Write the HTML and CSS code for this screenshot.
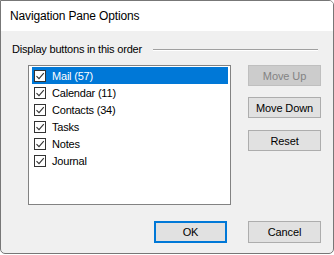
FILE: index.html
```html
<!DOCTYPE html>
<html>
<head>
<meta charset="utf-8">
<link rel="stylesheet" href="styles.css">
</head>
<body>
<div class="dialog">
  <div class="titlebar">Navigation Pane Options</div>
  <div class="content">
    <div class="group-header">
      <span class="group-label">Display buttons in this order</span>
      <span class="group-line"></span>
    </div>
    <div class="main">
      <div class="listbox">
        <div class="item selected"><span class="check"><svg viewBox="0 0 10 10" width="10" height="10"><path d="M1.5 5.2 L4 7.7 L8.8 2.2" fill="none" stroke="#333" stroke-width="1.1"/></svg></span><span class="item-text">Mail (57)</span></div>
        <div class="item"><span class="check"><svg viewBox="0 0 10 10" width="10" height="10"><path d="M1.5 5.2 L4 7.7 L8.8 2.2" fill="none" stroke="#333" stroke-width="1.1"/></svg></span><span class="item-text">Calendar (11)</span></div>
        <div class="item"><span class="check"><svg viewBox="0 0 10 10" width="10" height="10"><path d="M1.5 5.2 L4 7.7 L8.8 2.2" fill="none" stroke="#333" stroke-width="1.1"/></svg></span><span class="item-text">Contacts (34)</span></div>
        <div class="item"><span class="check"><svg viewBox="0 0 10 10" width="10" height="10"><path d="M1.5 5.2 L4 7.7 L8.8 2.2" fill="none" stroke="#333" stroke-width="1.1"/></svg></span><span class="item-text">Tasks</span></div>
        <div class="item"><span class="check"><svg viewBox="0 0 10 10" width="10" height="10"><path d="M1.5 5.2 L4 7.7 L8.8 2.2" fill="none" stroke="#333" stroke-width="1.1"/></svg></span><span class="item-text">Notes</span></div>
        <div class="item"><span class="check"><svg viewBox="0 0 10 10" width="10" height="10"><path d="M1.5 5.2 L4 7.7 L8.8 2.2" fill="none" stroke="#333" stroke-width="1.1"/></svg></span><span class="item-text">Journal</span></div>
      </div>
      <div class="side-buttons">
        <button class="btn disabled">Move Up</button>
        <button class="btn btn-down">Move Down</button>
        <button class="btn btn-reset">Reset</button>
      </div>
    </div>
    <div class="footer">
      <button class="btn default">OK</button>
      <button class="btn">Cancel</button>
    </div>
  </div>
</div>
</body>
</html>
```
FILE: styles.css
```css
html, body {
  margin: 0;
  padding: 0;
  background: #ffffff;
}
body {
  font-family: "Liberation Sans", Arial, sans-serif;
  font-size: 11px;
  color: #000;
}
.dialog {
  box-sizing: border-box;
  width: 334px;
  height: 254px;
  border: 1px solid #777777;
  border-radius: 0 5px 5px 5px;
  background: #f0f0f0;
  display: flex;
  flex-direction: column;
  overflow: hidden;
}
.titlebar {
  height: 30px;
  background: #ffffff;
  display: flex;
  align-items: center;
  padding-left: 9px;
  font-size: 12px;
  line-height: 14px;
  letter-spacing: -0.15px;
  color: #000;
}
.content {
  flex: 1;
  display: flex;
  flex-direction: column;
  padding: 12px 12px 0 11px;
}
.group-header {
  display: flex;
  align-items: center;
  height: 13px;
  line-height: 13px;
}
.group-label {
  letter-spacing: -0.2px;
}
.group-line {
  flex: 1;
  height: 1px;
  margin-left: 11px;
  margin-right: 3px;
  margin-top: 1px;
  border-top: 1px solid #a0a0a0;
  border-bottom: 1px solid #ffffff;
  height: 0;
}
.main {
  display: flex;
  margin-top: 9px;
  margin-left: 16px;
}
.listbox {
  box-sizing: border-box;
  width: 203px;
  height: 140px;
  border: 1px solid #828282;
  background: #ffffff;
  padding: 1px 2px 0 3px;
  display: flex;
  flex-direction: column;
}
.item {
  height: 17px;
  display: flex;
  align-items: center;
  padding-left: 2px;
  letter-spacing: -0.2px;
}
.item.selected {
  background: #0078d7;
  color: #ffffff;
}
.check {
  box-sizing: border-box;
  width: 12px;
  height: 12px;
  border: 1px solid #333333;
  background: #ffffff;
  display: flex;
  align-items: center;
  justify-content: center;
  margin-right: 6px;
}
.check svg {
  display: block;
}
.side-buttons {
  display: flex;
  flex-direction: column;
  margin-left: 17px;
}
.btn {
  box-sizing: border-box;
  width: 73px;
  height: 21px;
  padding: 0;
  margin: 0;
  font-family: "Liberation Sans", Arial, sans-serif;
  font-size: 11px;
  letter-spacing: -0.1px;
  color: #000;
  background: #e1e1e1;
  border: 1px solid #adadad;
  border-radius: 0;
  text-align: center;
}
.btn.disabled {
  background: #cccccc;
  border-color: #bfbfbf;
  color: #838383;
}
.btn-down {
  margin-top: 11px;
}
.btn-reset {
  margin-top: 12px;
}
.footer {
  display: flex;
  justify-content: flex-end;
  gap: 21px;
  margin-top: 16px;
}
.footer .btn {
  height: 22px;
}
.btn.default {
  border: 2px solid #0078d7;
}
```
